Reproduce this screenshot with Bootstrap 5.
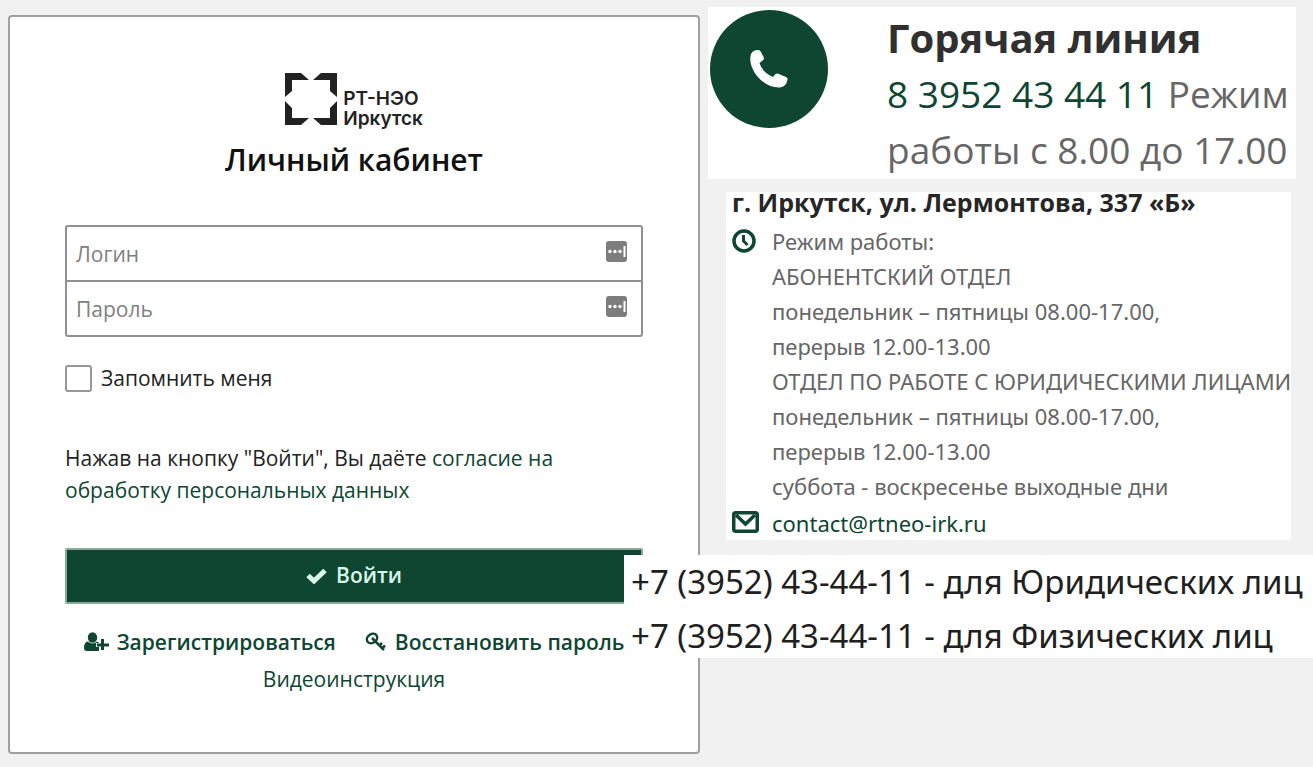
<!DOCTYPE html>
<html lang="ru">
<head>
<meta charset="utf-8">
<meta name="viewport" content="width=device-width, initial-scale=1">
<title>РТ-НЭО Иркутск — Личный кабинет</title>
<link href="https://cdn.jsdelivr.net/npm/bootstrap@5.3.0/dist/css/bootstrap.min.css" rel="stylesheet">
<style>
  :root { --brand: #0e4632; --line: #8f9190; }
  body { background: #f1f1f1; font-family: "Open Sans", "Noto Sans", sans-serif; color: #222; overflow-x: hidden; }
  a { color: var(--brand); text-decoration: none; }
  .page { padding: 7px 0 13px 8px; gap: 8px; }
  .login-panel { flex: 1 1 0; min-width: 0; margin-top: 8px; padding: 56px 55px 57px; border: 2px solid #a0a0a0; border-radius: 4px; font-size: 21px; line-height: 32px; }
  .brand-row { gap: 6px; margin-bottom: 11px; }
  .brand-row svg { margin-bottom: 4px; }
  .brand-name { font-family: Inter, "Noto Sans", sans-serif; font-weight: 600; font-size: 19px; line-height: 20px; color: #222; }
  .login-title { font-size: 30px; line-height: 40px; font-weight: 600; color: #111; margin-bottom: 45px; }
  .login-field { position: relative; }
  .login-field .form-control { height: 57px; padding: 0 48px 0 9px; border: 2px solid var(--line); border-radius: 3px; font-size: 21px; color: #222; }
  .login-field .form-control::placeholder { color: #808080; opacity: 1; }
  .login-field:first-child .form-control { border-radius: 3px 3px 0 0; }
  .login-field + .login-field { margin-top: -2px; }
  .login-field + .login-field .form-control { border-radius: 0 0 3px 3px; }
  .field-mark { position: absolute; right: 16px; top: 16px; }
  .remember { gap: 9px; margin: 25px 0 48px; }
  .remember .form-check-input { width: 27px; height: 27px; margin: 0; border: 2px solid #979797; border-radius: 3px; }
  .btn-login { height: 56px; margin-top: 42px; border: 2px solid #8aa79c; border-radius: 2px; background: var(--brand); color: #d9f7e9; font-size: 21px; font-weight: 600; gap: 9px; padding: 0; }
  .btn-login:hover { background: #0a3626; color: #fff; }
  .account-links { gap: 29px; margin: 22px 0 5px; font-weight: 600; white-space: nowrap; }
  .account-links a { gap: 8px; }
  .contacts { flex: 0 0 605px; min-width: 0; }
  .hotline { margin-right: 17px; padding: 3px 0 0 2px; font-size: 37px; line-height: 56px; color: #666; }
  .hotline h2 { font-size: 40px; line-height: 56px; font-weight: 700; color: #303030; margin: 0; }
  .hotline-text { padding-bottom: 1px; white-space: nowrap; }
  .phone-disc { width: 118px; height: 118px; margin-right: 59px; background: var(--brand); }
  .office { margin: 13px 22px 0 18px; padding: 0 0 0 6px; font-family: "Noto Sans", "Open Sans", sans-serif; font-size: 22px; line-height: 35px; color: #666; white-space: nowrap; }
  .office h3 { font-family: "Open Sans", "Noto Sans", sans-serif; font-size: 25px; line-height: 20px; font-weight: 700; color: #262626; margin: 0 0 12px; }
  .office-icon { flex: 0 0 40px; padding-top: 5px; }
  .office-mail { margin-top: 2px; line-height: 34px; }
  .phones { position: relative; z-index: 2; margin: 15px 0 0 -84px; padding: 5px 0 0 7px; gap: 10px; font-family: "Noto Sans", "Open Sans", sans-serif; font-size: 33px; line-height: 44px; color: #202020; white-space: nowrap; }
</style>
</head>
<body>
<div class="page d-flex align-items-start">
  <main class="login-panel bg-white">
    <div class="brand-row d-flex justify-content-center align-items-end">
      <svg width="52" height="52" viewBox="0 0 52 52" fill="#222" aria-hidden="true">
        <path d="M0 0H16L24 7H7V18L0 24Z"/>
        <path d="M52 0H36L28 7H45V18L52 24Z"/>
        <path d="M0 52H16L24 45H7V35L0 28Z"/>
        <path d="M52 52H36L28 45H45V35L52 28Z"/>
      </svg>
      <div class="brand-name">РТ-НЭО<br>Иркутск</div>
    </div>
    <h1 class="login-title text-center">Личный кабинет</h1>
    <form>
      <div>
        <div class="login-field">
          <input class="form-control" type="text" placeholder="Логин" aria-label="Логин">
          <svg class="field-mark" width="21" height="21" viewBox="0 0 21 21" aria-hidden="true"><rect width="21" height="21" rx="3" fill="#7d7d7d"/><g fill="#fff"><circle cx="4" cy="10.500" r="1.700"/><circle cx="9" cy="10.500" r="1.700"/><circle cx="14" cy="10.500" r="1.700"/><path d="M17.500 5h2v11h-2z"/></g></svg>
        </div>
        <div class="login-field">
          <input class="form-control" type="password" placeholder="Пароль" aria-label="Пароль">
          <svg class="field-mark" width="21" height="21" viewBox="0 0 21 21" aria-hidden="true"><rect width="21" height="21" rx="3" fill="#7d7d7d"/><g fill="#fff"><circle cx="4" cy="10.500" r="1.700"/><circle cx="9" cy="10.500" r="1.700"/><circle cx="14" cy="10.500" r="1.700"/><path d="M17.500 5h2v11h-2z"/></g></svg>
        </div>
      </div>
      <div class="remember d-flex align-items-center">
        <input class="form-check-input" type="checkbox" id="remember">
        <label for="remember">Запомнить меня</label>
      </div>
      <p class="m-0">Нажав на кнопку "Войти", Вы даёте <a href="#">согласие на<br>обработку персональных данных</a></p>
      <button type="submit" class="btn btn-login w-100 d-flex justify-content-center align-items-center">
        <svg width="21" height="16" viewBox="0 0 21 16" fill="none" stroke="currentColor" stroke-width="5" aria-hidden="true"><path d="M2 7.500L8 13L19 2.500"/></svg>
        Войти
      </button>
    </form>
    <div class="account-links d-flex justify-content-center">
      <a href="#" class="d-flex align-items-center">
        <svg width="25" height="20" viewBox="0 0 25 20" fill="currentColor" aria-hidden="true"><ellipse cx="8.500" cy="5.500" rx="4.700" ry="5.300"/><path d="M4 9.500C6.500 12 10.500 12 13 9.500Q14.500 10 15 11H12V15H15V19H3Q0 19 0 16Q0 10 4 9.500Z"/><path d="M17 7H20V11.500H25V14.500H20V18H17V14.500H13V11.500H17Z"/></svg>
        Зарегистрироваться</a>
      <a href="#" class="d-flex align-items-center">
        <svg width="22" height="20" viewBox="0 0 22 20" fill="none" stroke="currentColor" stroke-width="2.500" aria-hidden="true"><ellipse cx="7" cy="6.500" rx="5.500" ry="4.300" transform="rotate(-35 7 6.500)"/><path d="M7 6L19 18M14.500 13.500L17 11M17 16.500L20 13.500"/></svg>
        Восстановить пароль</a>
    </div>
    <div class="text-center"><a href="#">Видеоинструкция</a></div>
  </main>

  <aside class="contacts">
    <section class="hotline bg-white d-flex">
      <div class="phone-disc rounded-circle flex-shrink-0 d-flex align-items-center justify-content-center">
        <svg width="40" height="40" viewBox="0 0 40 40" fill="#fff" aria-hidden="true"><path d="M2 5Q4 1 9 1Q11 1 12 3L15 9Q15 11 13 12L10.500 14Q13 23 24 28L26 25.500Q28 24 30 25L37 28Q39 29 38.500 31Q37 38 31 38.500Q18 39 8 27Q-1 15 2 5Z"/></svg>
      </div>
      <div class="hotline-text">
        <h2>Горячая линия</h2>
        <div><a href="tel:83952434411">8 3952 43 44 11</a> Режим</div>
        <div>работы с 8.00 до 17.00</div>
      </div>
    </section>

    <section class="office bg-white">
      <h3>г. Иркутск, ул. Лермонтова, 337 «Б»</h3>
      <div class="d-flex">
        <div class="office-icon">
          <svg class="d-block" width="24" height="24" viewBox="0 0 24 24" fill="none" stroke="#0e4632" aria-hidden="true"><circle cx="12" cy="12" r="10" stroke-width="3.500"/><path d="M11.500 6V12L15.500 16" stroke-width="3"/></svg>
        </div>
        <div>
          <div>Режим работы:</div>
          <div>АБОНЕНТСКИЙ ОТДЕЛ</div>
          <div>понедельник – пятницы 08.00-17.00,</div>
          <div>перерыв 12.00-13.00</div>
          <div>ОТДЕЛ ПО РАБОТЕ С ЮРИДИЧЕСКИМИ ЛИЦАМИ</div>
          <div>понедельник – пятницы 08.00-17.00,</div>
          <div>перерыв 12.00-13.00</div>
          <div>суббота - воскресенье выходные дни</div>
        </div>
      </div>
      <div class="office-mail d-flex">
        <div class="office-icon">
          <svg class="d-block" width="27" height="22" viewBox="0 0 27 22" fill="none" stroke="#0e4632" stroke-width="3.500" aria-hidden="true"><rect x="1.750" y="1.750" width="23.500" height="18.500" rx="2"/><path d="M4 4L13.500 13L23 4"/></svg>
        </div>
        <a href="mailto:contact@rtneo-irk.ru">contact@rtneo-irk.ru</a>
      </div>
    </section>

    <section class="phones bg-white d-flex flex-column">
      <div>+7 (3952) 43-44-11 - для Юридических лиц</div>
      <div>+7 (3952) 43-44-11 - для Физических лиц</div>
    </section>
  </aside>
</div>
<script src="https://cdn.jsdelivr.net/npm/bootstrap@5.3.0/dist/js/bootstrap.bundle.min.js"></script>
</body>
</html>
